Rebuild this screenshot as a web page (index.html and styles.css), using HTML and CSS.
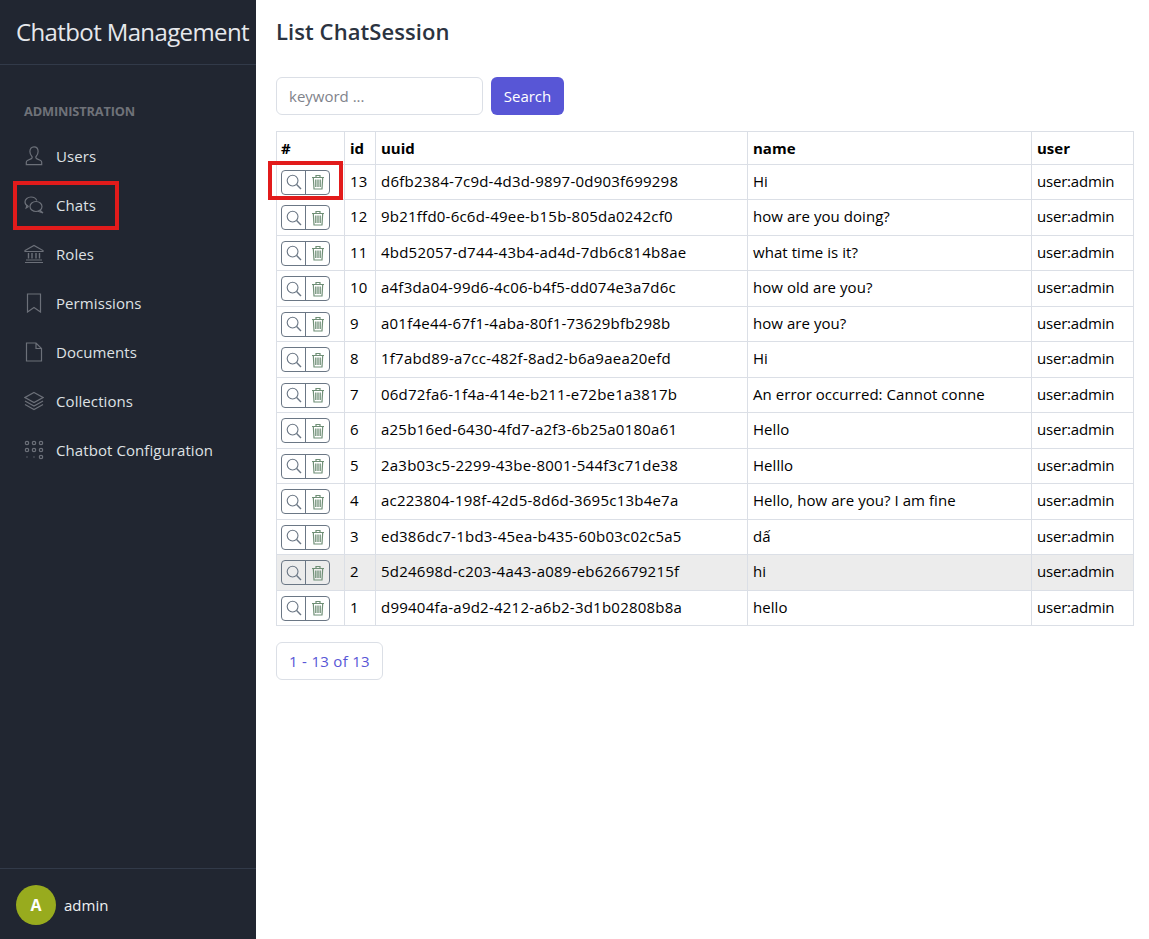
FILE: index.html
```html
<!DOCTYPE html>
<html lang="en">
<head>
<meta charset="utf-8">
<title>List ChatSession</title>
<link rel="stylesheet" href="styles.css">
</head>
<body>
<svg class="defs" width="0" height="0" aria-hidden="true">
  <symbol id="i-search" viewBox="0 0 16 16"><circle cx="6.600" cy="6.600" r="5.400" fill="none" stroke="currentColor" stroke-width="1.100"/><path d="M10.600 10.600 15 15" fill="none" stroke="currentColor" stroke-width="1.400"/></symbol>
  <symbol id="i-trash" viewBox="0 0 16 16"><path d="M2 3.500h12M6 3.500V1.500h4v2M3.300 3.500l.7 11.500h8l.7-11.500" fill="none" stroke="currentColor" stroke-width="1.200"/><path d="M5.800 5.500v7.500M8 5.500v7.500M10.200 5.500v7.500" stroke="currentColor" stroke-width="1.300"/></symbol>
</svg>
<div class="layout">
  <aside class="sidebar">
    <div class="brand">Chatbot Management</div>
    <nav class="nav">
      <div class="nav-title">ADMINISTRATION</div>
      <a class="nav-link"><svg class="nav-icon" viewBox="0 0 20 20"><path d="M10 .8c-2.600 0-4.100 1.900-4.100 4.700 0 2.400 1 4 2 5 .5.600.3 1.700-.5 2.100l-4 1.900c-.8.400-1.100 1-1.100 1.800v2.400h15.400v-2.400c0-.8-.3-1.400-1.100-1.800l-4-1.900c-.8-.4-1-1.500-.5-2.100 1-1 2-2.600 2-5 0-2.800-1.500-4.700-4.100-4.700z"/></svg>Users</a>
      <a class="nav-link"><svg class="nav-icon" viewBox="0 0 20 20"><path d="M4.500 11.500C2.600 10.700 1 9.300 1 7.100 1 4.100 3.700 2 7 2c2.700 0 5 1.400 5.800 3.500"/><path d="M4.500 11.500 2.200 13l.8-3"/><ellipse cx="12" cy="11.500" rx="6" ry="5"/><path d="M16 15.300l3 2.700-5-1.700"/></svg>Chats</a>
      <a class="nav-link"><svg class="nav-icon" viewBox="0 0 20 20"><path d="M1 6.500 10 1.500l9 5v1H1zM2 16h16M1 18.500h18"/><path d="M4.500 9v5.500M8 9v5.500M12 9v5.500M15.500 9v5.500" stroke-width="1.400"/></svg>Roles</a>
      <a class="nav-link"><svg class="nav-icon" viewBox="0 0 20 20"><path d="M3.500 1h13v18L10 14.500 3.500 19z"/></svg>Permissions</a>
      <a class="nav-link"><svg class="nav-icon" viewBox="0 0 20 20"><path d="M2.500 1h9.500l5.500 5.500V19h-15zM12 1v5.500h5.500"/></svg>Documents</a>
      <a class="nav-link"><svg class="nav-icon" viewBox="0 0 20 20"><path d="M10 1.500 19 6.500l-9 5-9-5zM1 10l9 5 9-5M1 13.500l9 5 9-5"/></svg>Collections</a>
      <a class="nav-link"><svg class="nav-icon" viewBox="0 0 20 20"><circle cx="3" cy="3" r="1.700"/><circle cx="10" cy="3" r="1.700"/><circle cx="17" cy="3" r="1.700"/><circle cx="3" cy="10" r="1.700"/><circle cx="10" cy="10" r="1.700"/><circle cx="17" cy="10" r="1.700"/><circle cx="17" cy="17" r="1.700"/><path d="M2.300 17h1.400M9.300 17h1.400"/></svg>Chatbot Configuration</a>
    </nav>
    <div class="user">
      <span class="avatar">A</span>
      <span class="user-name">admin</span>
    </div>
  </aside>
  <main class="content">
    <h1 class="title">List ChatSession</h1>
    <form class="search">
      <input class="search-input" placeholder="keyword ...">
      <button class="search-btn" type="button">Search</button>
    </form>
    <table class="grid">
      <colgroup><col class="c1"><col class="c2"><col class="c3"><col class="c4"><col class="c5"></colgroup>
      <thead><tr><th>#</th><th>id</th><th>uuid</th><th>name</th><th>user</th></tr></thead>
      <tbody>
        <tr><td><div class="acts"><button class="act" type="button"><svg><use href="#i-search"/></svg></button><button class="act trash" type="button"><svg><use href="#i-trash"/></svg></button></div></td><td>13</td><td>d6fb2384-7c9d-4d3d-9897-0d903f699298</td><td>Hi</td><td>user:admin</td></tr>
        <tr><td><div class="acts"><button class="act" type="button"><svg><use href="#i-search"/></svg></button><button class="act trash" type="button"><svg><use href="#i-trash"/></svg></button></div></td><td>12</td><td>9b21ffd0-6c6d-49ee-b15b-805da0242cf0</td><td>how are you doing?</td><td>user:admin</td></tr>
        <tr><td><div class="acts"><button class="act" type="button"><svg><use href="#i-search"/></svg></button><button class="act trash" type="button"><svg><use href="#i-trash"/></svg></button></div></td><td>11</td><td>4bd52057-d744-43b4-ad4d-7db6c814b8ae</td><td>what time is it?</td><td>user:admin</td></tr>
        <tr><td><div class="acts"><button class="act" type="button"><svg><use href="#i-search"/></svg></button><button class="act trash" type="button"><svg><use href="#i-trash"/></svg></button></div></td><td>10</td><td>a4f3da04-99d6-4c06-b4f5-dd074e3a7d6c</td><td>how old are you?</td><td>user:admin</td></tr>
        <tr><td><div class="acts"><button class="act" type="button"><svg><use href="#i-search"/></svg></button><button class="act trash" type="button"><svg><use href="#i-trash"/></svg></button></div></td><td>9</td><td>a01f4e44-67f1-4aba-80f1-73629bfb298b</td><td>how are you?</td><td>user:admin</td></tr>
        <tr><td><div class="acts"><button class="act" type="button"><svg><use href="#i-search"/></svg></button><button class="act trash" type="button"><svg><use href="#i-trash"/></svg></button></div></td><td>8</td><td>1f7abd89-a7cc-482f-8ad2-b6a9aea20efd</td><td>Hi</td><td>user:admin</td></tr>
        <tr><td><div class="acts"><button class="act" type="button"><svg><use href="#i-search"/></svg></button><button class="act trash" type="button"><svg><use href="#i-trash"/></svg></button></div></td><td>7</td><td>06d72fa6-1f4a-414e-b211-e72be1a3817b</td><td>An error occurred: Cannot conne</td><td>user:admin</td></tr>
        <tr><td><div class="acts"><button class="act" type="button"><svg><use href="#i-search"/></svg></button><button class="act trash" type="button"><svg><use href="#i-trash"/></svg></button></div></td><td>6</td><td>a25b16ed-6430-4fd7-a2f3-6b25a0180a61</td><td>Hello</td><td>user:admin</td></tr>
        <tr><td><div class="acts"><button class="act" type="button"><svg><use href="#i-search"/></svg></button><button class="act trash" type="button"><svg><use href="#i-trash"/></svg></button></div></td><td>5</td><td>2a3b03c5-2299-43be-8001-544f3c71de38</td><td>Helllo</td><td>user:admin</td></tr>
        <tr><td><div class="acts"><button class="act" type="button"><svg><use href="#i-search"/></svg></button><button class="act trash" type="button"><svg><use href="#i-trash"/></svg></button></div></td><td>4</td><td>ac223804-198f-42d5-8d6d-3695c13b4e7a</td><td>Hello, how are you? I am fine</td><td>user:admin</td></tr>
        <tr><td><div class="acts"><button class="act" type="button"><svg><use href="#i-search"/></svg></button><button class="act trash" type="button"><svg><use href="#i-trash"/></svg></button></div></td><td>3</td><td>ed386dc7-1bd3-45ea-b435-60b03c02c5a5</td><td>dấ</td><td>user:admin</td></tr>
        <tr class="hover"><td><div class="acts"><button class="act" type="button"><svg><use href="#i-search"/></svg></button><button class="act trash" type="button"><svg><use href="#i-trash"/></svg></button></div></td><td>2</td><td>5d24698d-c203-4a43-a089-eb626679215f</td><td>hi</td><td>user:admin</td></tr>
        <tr><td><div class="acts"><button class="act" type="button"><svg><use href="#i-search"/></svg></button><button class="act trash" type="button"><svg><use href="#i-trash"/></svg></button></div></td><td>1</td><td>d99404fa-a9d2-4212-a6b2-3d1b02808b8a</td><td>hello</td><td>user:admin</td></tr>
      </tbody>
    </table>
    <div class="pager">1 - 13 of 13</div>
  </main>
</div>
<div class="mark mark-nav"></div>
<div class="mark mark-row"></div>
</body>
</html>
```

FILE: styles.css
```css
* { box-sizing: border-box; }
html, body { margin: 0; height: 100%; }
body { font-family: "Open Sans", "Noto Sans", "Liberation Sans", sans-serif; font-size: 16px; color: #000; background: #fff; }
.defs { position: absolute; }
.layout { display: flex; height: 939px; }
.sidebar { width: 256px; flex: none; background: #212631; display: flex; flex-direction: column; color: rgba(255,255,255,.87); }
.brand { height: 65px; padding: 0 0 2px 16px; display: flex; align-items: center; font-size: 24px; border-bottom: 1px solid #323a49; color: #e6e8ec; white-space: nowrap; letter-spacing: -.62px; }
.nav { flex: 1; padding-top: 8px; }
.nav-title { padding: 16px 24px 0; height: 60px; margin-bottom: -2px; display: flex; align-items: center; font-size: 12.800px; font-weight: 700; color: #6f7279; letter-spacing: -.15px; }
.nav-link { display: flex; align-items: center; height: 49px; padding-left: 24px; font-size: 15px; color: #dfe1e4; letter-spacing: .08px; }
.nav-icon { width: 20px; height: 20px; margin-right: 12px; fill: none; stroke: #6c7079; stroke-width: 1.200; flex: none; }
.user { height: 71px; border-top: 1px solid #323a49; display: flex; align-items: center; padding: 2px 0 0 16px; gap: 8px; }
.avatar { width: 40px; height: 40px; border-radius: 50%; background: #98ab1e; color: #fff; font-weight: 700; font-size: 16px; display: flex; align-items: center; justify-content: center; }
.user-name { font-size: 15px; color: #eef0f2; }
.content { flex: 1; padding: 0 15px 0 20px; color: #212631; }
.title { margin: 0; height: 62px; display: flex; align-items: center; font-size: 22px; font-weight: 600; letter-spacing: .08px; color: #2b3340; }
.search { display: flex; gap: 8px; margin-top: 15px; }
.search-input { width: 207px; height: 38px; padding: 0 12px; border: 1px solid #dbdfe6; border-radius: 6px; font: inherit; font-size: 15px; }
.search-input::placeholder { color: #7f838b; }
.search-btn { width: 73px; height: 38px; border: 0; border-radius: 6px; background: #5856d6; color: #fff; font: inherit; font-size: 15px; }
.grid { border-collapse: collapse; table-layout: fixed; width: 857.500px; margin-top: 16px; font-size: 15px; color: #000; }
.c1 { width: 68px; } .c2 { width: 31px; } .c3 { width: 372px; } .c4 { width: 284px; } .c5 { width: 102px; }
.grid th, .grid td { border: 1px solid #dbdfe6; padding: 0 4px 0 5px; text-align: left; white-space: nowrap; overflow: hidden; }
.grid th:first-child, .grid td:first-child { padding-left: 4px; }
.grid th { height: 32.500px; font-weight: 700; }
.grid td { height: 35.500px; padding-bottom: 2px; letter-spacing: .05px; }
.grid td:nth-child(3) { letter-spacing: .23px; }
.grid td:nth-child(5) { letter-spacing: -.2px; }
.hover td { background: #ececec; }
.acts { display: flex; width: 49px; height: 25px; margin-top: 3px; border: 1px solid #6b7785; border-radius: 4px; overflow: hidden; }
.act { flex: 1; padding: 0; border: 0; background: none; display: flex; align-items: center; justify-content: center; color: #6b7785; }
.act + .act { border-left: 1px solid #6b7785; }
.act svg { width: 16px; height: 16px; }
.trash svg { color: #6f8f76; }
.pager { display: inline-block; margin-top: 16px; height: 38px; width: 107px; line-height: 36px; text-align: center; border: 1px solid #dbdfe6; border-radius: 6px; color: #5856d6; font-size: 15px; letter-spacing: .3px; }
.mark { position: absolute; border: 4px solid #e21b1b; }
.mark-nav { left: 13px; top: 181px; width: 106px; height: 49px; }
.mark-row { left: 268px; top: 161px; width: 75px; height: 39px; }
```
